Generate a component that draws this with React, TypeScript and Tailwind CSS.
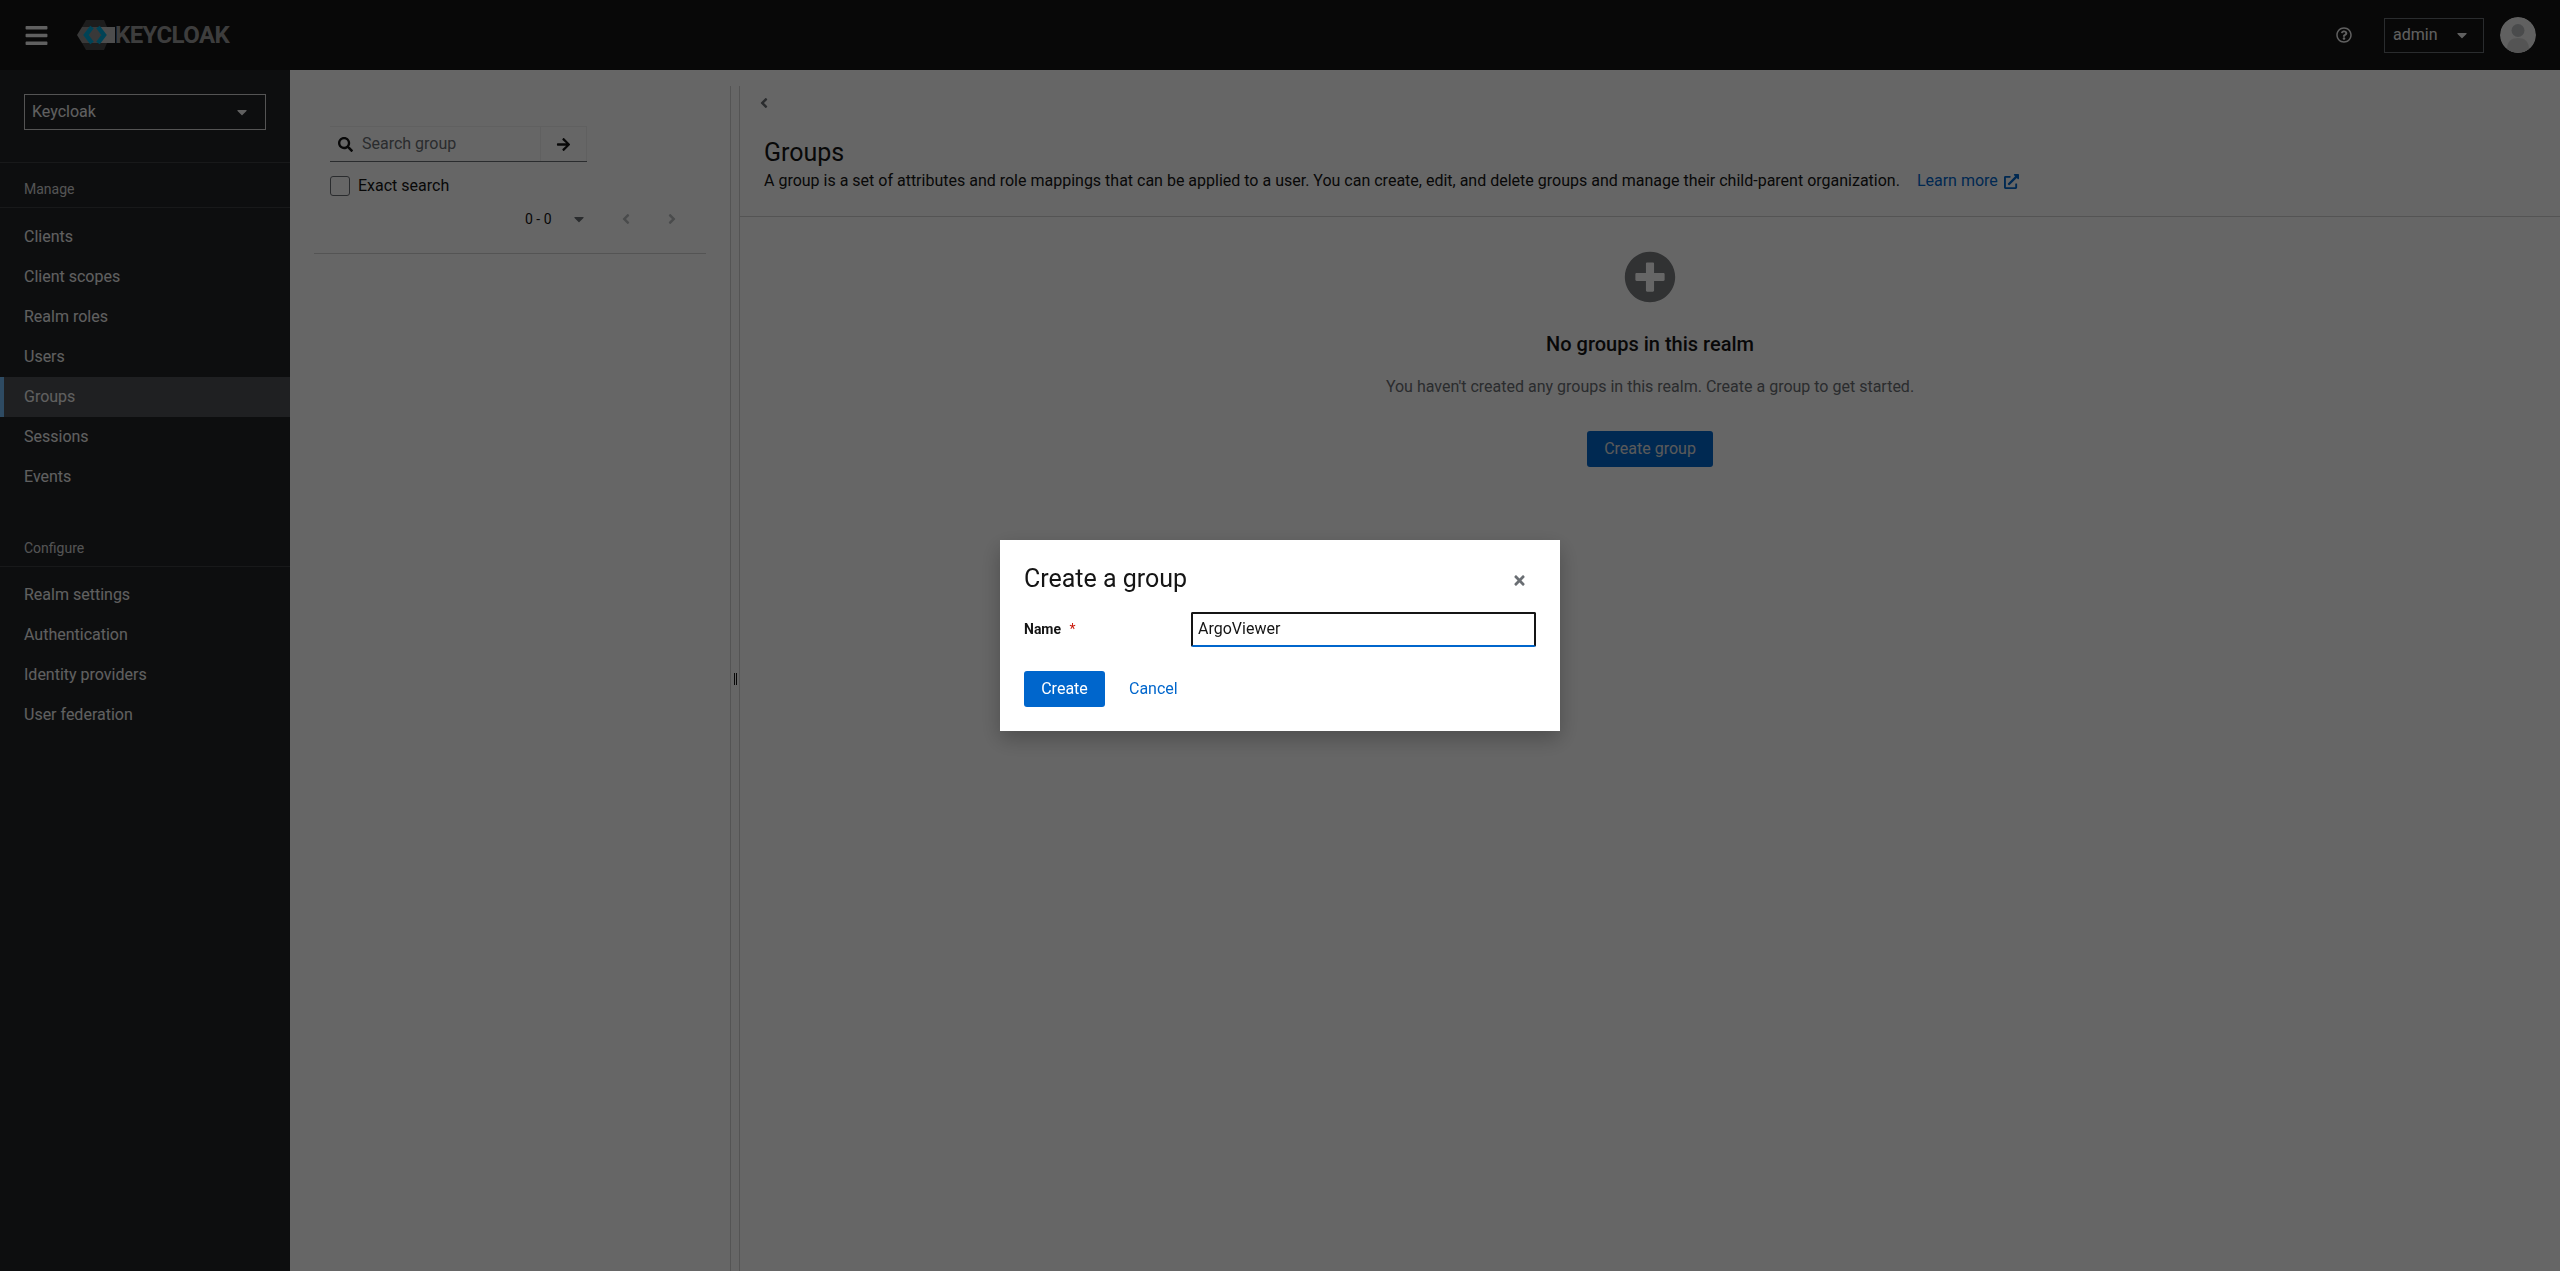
import { FaAngleLeft, FaAngleRight, FaArrowRight, FaBars, FaCaretDown, FaExternalLinkAlt, FaPlusCircle, FaRegQuestionCircle, FaSearch, FaTimes } from 'react-icons/fa';

const manageItems = ['Clients', 'Client scopes', 'Realm roles', 'Users', 'Groups', 'Sessions', 'Events'];
const configureItems = ['Realm settings', 'Authentication', 'Identity providers', 'User federation'];

function KeycloakLogo() {
  return (
    <div className="ml-[28px] flex h-[30px] w-[152px] items-center">
      <svg viewBox="0 0 38 30" className="h-[30px] w-[38px] shrink-0">
        <polygon points="0,15 5,7 30,7 38,15 30,23 5,23" fill="#8f8f8f" />
        <polygon points="5,7 9,0 27,0 30,7" fill="#4a4a4a" />
        <polygon points="5,23 9,30 27,30 30,23" fill="#4a4a4a" />
        <polygon points="24,7 38,7 38,23 24,23" fill="#c0c0c0" />
        <path d="M15 7 L9 15 L15 23 M21 7 L27 15 L21 23" fill="none" stroke="#00a8d8" strokeWidth="4.5" />
      </svg>
      <span className="text-[24px] leading-none font-bold tracking-[-0.6px] text-[#9a9a9a]">KEYCLOAK</span>
    </div>
  );
}

function Header() {
  return (
    <header className="flex h-[70px] shrink-0 items-center bg-[#151515] pr-[24px] pl-[24px]">
      <FaBars className="h-[25px] w-[25px] text-[#f0f0f0]" />
      <KeycloakLogo />
      <div className="ml-auto flex items-center">
        <FaRegQuestionCircle className="h-[16px] w-[16px] text-[#f0f0f0]" />
        <div className="ml-[32px] flex h-[35px] w-[100px] items-center border border-[#6a6e73] pl-[8px] text-[16px] text-[#f0f0f0]">
          admin
          <FaCaretDown className="ml-[17px] h-[16px] w-[16px] text-[#f0f0f0]" />
        </div>
        <svg viewBox="0 0 36 36" className="ml-[16px] h-[36px] w-[36px] rounded-full">
          <circle cx="18" cy="18" r="18" fill="#f0f0f0" />
          <circle cx="18" cy="13.5" r="6.5" fill="#b8bbbe" />
          <path d="M7 32 C7 24 12 21 18 21 C24 21 29 24 29 32 A18 18 0 0 1 7 32 Z" fill="#d2d2d2" />
        </svg>
      </div>
    </header>
  );
}

function NavItem({ label }: { label: string }) {
  const active = label === 'Groups';
  return (
    <div
      className={
        active
          ? 'flex h-[40px] items-center border-l-[4px] border-[#73bcf7] bg-[#4f5255] pl-[20px] text-[16px] text-[#f0f0f0]'
          : 'flex h-[40px] items-center pl-[24px] text-[16px] text-[#f0f0f0]'
      }
    >
      {label}
    </div>
  );
}

function Sidebar() {
  return (
    <aside className="flex w-[290px] shrink-0 flex-col bg-[#212427]">
      <div className="h-[93px] border-b border-[#3c3f42] px-[24px] pt-[24px]">
        <div className="flex h-[36px] w-[242px] items-center justify-between border border-[#d2d2d2] pr-[15px] pl-[7px] text-[16px] text-[#f0f0f0]">
          Keycloak
          <FaCaretDown className="h-[16px] w-[16px] text-[#f0f0f0]" />
        </div>
      </div>
      <div className="flex h-[45px] items-end border-b border-[#3c3f42] pb-[8px] pl-[24px] text-[14px] leading-[20px] text-[#d2d2d2]">Manage</div>
      <nav className="pt-[9px]">
        {manageItems.map((item) => (
          <NavItem key={item} label={item} />
        ))}
      </nav>
      <div className="mt-[25px] flex h-[45px] items-end border-b border-[#3c3f42] pb-[8px] pl-[24px] text-[14px] leading-[20px] text-[#d2d2d2]">Configure</div>
      <nav className="pt-[8px]">
        {configureItems.map((item) => (
          <NavItem key={item} label={item} />
        ))}
      </nav>
    </aside>
  );
}

function TreePanel() {
  return (
    <div className="w-[440px] shrink-0 px-[24px] pt-[40px]">
      <div className="ml-[16px] flex h-[36px] w-[257px] items-center border-t border-b border-t-[#f0f0f0] border-b-[#6a6e73]">
        <div className="flex h-full flex-1 items-center pl-[8px] text-[16px] text-[#6a6e73]">
          <FaSearch className="mr-[9px] h-[15px] w-[15px] text-[#151515]" />
          Search group
        </div>
        <div className="flex h-full w-[47px] items-center justify-center border-r border-l border-[#f0f0f0]">
          <FaArrowRight className="h-[15px] w-[15px] text-[#151515]" />
        </div>
      </div>
      <div className="mt-[13px] ml-[16px] flex h-[22px] items-center">
        <div className="h-[20px] w-[20px] rounded-[3px] border border-[#6a6e73] bg-white" />
        <span className="ml-[8px] text-[16px] text-[#151515]">Exact search</span>
      </div>
      <div className="mt-[10px] flex h-[24px] items-center pl-[211px] text-[14px] text-[#151515]">
        <span className="w-[36px]">0 - 0</span>
        <FaCaretDown className="ml-[10px] h-[16px] w-[16px] text-[#6a6e73]" />
        <FaAngleLeft className="ml-[31px] h-[16px] w-[16px] text-[#b8bbbe]" />
        <FaAngleRight className="ml-[30px] h-[16px] w-[16px] text-[#b8bbbe]" />
      </div>
      <div className="mt-[22px] border-b border-[#d2d2d2]" />
    </div>
  );
}

function Splitter() {
  return (
    <div className="flex w-[10px] shrink-0 items-center justify-center gap-[1px] border-x border-[#d2d2d2]">
      <div className="h-[12px] w-[1px] bg-[#151515]" />
      <div className="h-[12px] w-[1px] bg-[#151515]" />
    </div>
  );
}

function GroupsPanel() {
  return (
    <div className="flex min-w-0 flex-1 flex-col">
      <div className="flex h-[131px] flex-col border-b border-[#d2d2d2] pl-[24px]">
        <FaAngleLeft className="mt-[9px] -ml-[8px] h-[16px] w-[16px] text-[#6a6e73]" />
        <h1 className="mt-[25px] text-[25px] leading-[33px] text-[#151515]">Groups</h1>
        <p className="flex items-center text-[16px] leading-[24px] text-[#151515]">
          A group is a set of attributes and role mappings that can be applied to a user. You can create, edit, and delete groups and manage their child-parent organization.
          <span className="ml-[17px] flex items-center text-[#06c]">
            Learn more
            <FaExternalLinkAlt className="ml-[6px] h-[15px] w-[15px]" />
          </span>
        </p>
      </div>
      <div className="flex flex-col items-center pt-[34px]">
        <FaPlusCircle className="h-[52px] w-[52px] text-[#7a7d80]" />
        <h2 className="mt-[26px] text-[20px] leading-[30px] font-medium text-[#151515]">No groups in this realm</h2>
        <p className="mt-[16px] text-[16px] leading-[24px] text-[#6a6e73]">You haven&apos;t created any groups in this realm. Create a group to get started.</p>
        <button className="mt-[32px] h-[36px] w-[126px] rounded-[3px] bg-[#06c] text-[16px] text-[#e0e0e0]">Create group</button>
      </div>
    </div>
  );
}

function CreateGroupModal() {
  return (
    <div className="fixed inset-0 flex items-center justify-center bg-black/60">
      <div className="h-[191px] w-[560px] bg-white px-[24px] pt-[24px] shadow-[0_8px_20px_rgba(0,0,0,0.25)]">
        <div className="flex h-[30px] items-center justify-between pr-[9px]">
          <h2 className="text-[25px] leading-[30px] text-[#151515]">Create a group</h2>
          <FaTimes className="mt-[2px] h-[15px] w-[15px] text-[#6a6e73]" />
        </div>
        <div className="mt-[18px] flex h-[34px] items-center">
          <label className="w-[167px] text-[14px] font-bold text-[#151515]">
            Name <span className="ml-[5px] font-normal text-[#c9190b]">*</span>
          </label>
          <div className="flex h-[35px] w-[345px] items-center rounded-[2px] border-2 border-[#151515] border-b-[#06c] pl-[5px] text-[16px] text-[#151515]">ArgoViewer</div>
        </div>
        <div className="mt-[25px] flex items-center">
          <button className="h-[36px] w-[81px] rounded-[3px] bg-[#06c] text-[16px] text-white">Create</button>
          <span className="ml-[24px] text-[16px] text-[#06c]">Cancel</span>
        </div>
      </div>
    </div>
  );
}

export default function App() {
  return (
    <div className="flex h-[1271px] flex-col overflow-hidden bg-white font-['Roboto',sans-serif]">
      <Header />
      <div className="flex min-h-0 flex-1">
        <Sidebar />
        <main className="flex min-w-0 flex-1 pt-[16px]">
          <TreePanel />
          <Splitter />
          <GroupsPanel />
        </main>
      </div>
      <CreateGroupModal />
    </div>
  );
}
